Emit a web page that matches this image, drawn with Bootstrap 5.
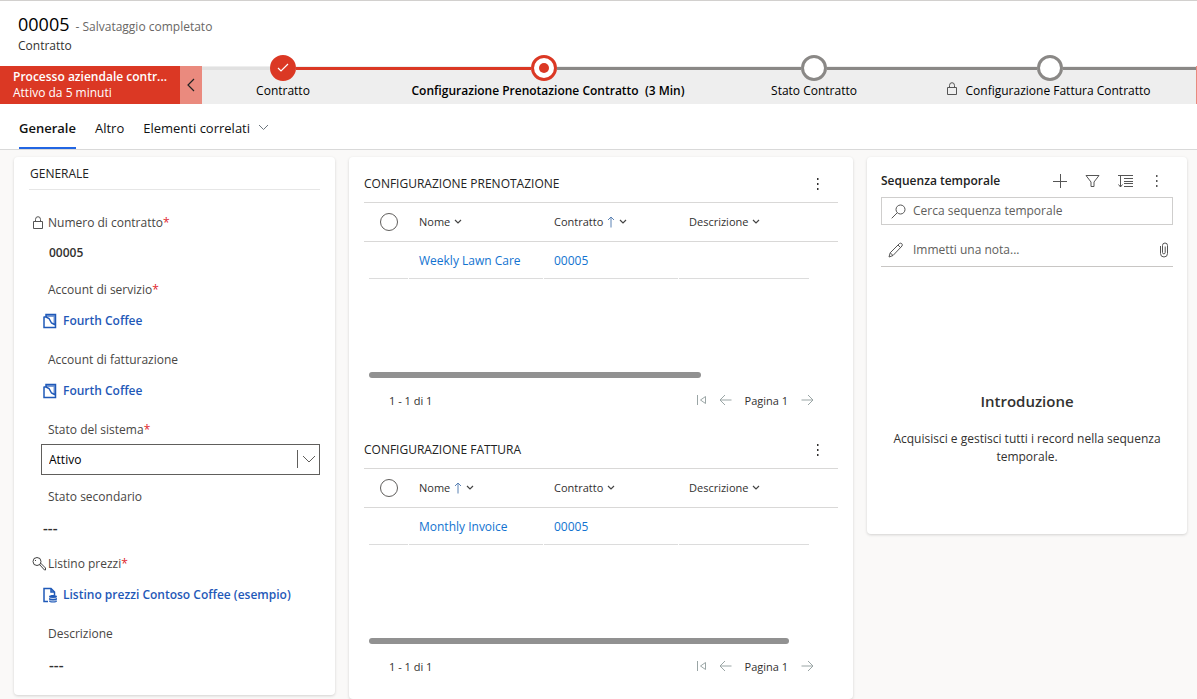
<!DOCTYPE html>
<html lang="it">
<head>
<meta charset="utf-8">
<meta name="viewport" content="width=device-width, initial-scale=1">
<title>00005 - Contratto</title>
<link href="https://cdn.jsdelivr.net/npm/bootstrap@5.3.0/dist/css/bootstrap.min.css" rel="stylesheet">
<style>
  :root { --red: #db3824; --gray: #8a8886; --rule: #d9d8d7; }
  body { font-family: "Open Sans", "Noto Sans", sans-serif; font-size: 12px; line-height: 18px; color: #323130; background: #faf9f8; }
  a { text-decoration: none; }
  svg { display: block; fill: none; stroke: currentColor; flex: none; }
  button { border: 0; background: none; padding: 0; color: inherit; }

  .page-head { border-top: 1px solid #d2d0ce; padding: 12px 18px 11px; }
  .page-title { gap: 6px; padding-bottom: 1px; }
  .page-head h1 { font-size: 18px; line-height: 22px; font-weight: 500; color: #000; }
  .saved { color: #696765; }

  .process-name { width: 180px; height: 38px; padding: 3px 8px 3px 13px; background: var(--red); color: #fff; line-height: 16px; flex: none; }
  .process-toggle { width: 22px; background: #ea8a7e; color: #222; flex: none; }
  .process-end { width: 1px; background: #ea8a7e; }
  .stages { display: grid; grid-template-columns: 162fr 360fr 180fr 292fr; background: #eee; color: #000; }
  .stage { margin-top: -11px; min-width: 0; }
  .stage-name { padding-top: 1px; }
  .track { height: 3px; background: var(--gray); }
  .track.done { background: var(--red); }
  .track.idle { background: #e1e1e1; }
  .dot { width: 26px; height: 26px; border-radius: 50%; border: 3px solid var(--gray); background: #fff; padding: 0; color: #fff; }
  .dot.done { border-color: var(--red); background: var(--red); }
  .dot.now { border-color: var(--red); }
  .dot.now::after { content: ""; width: 10px; height: 10px; border-radius: 50%; background: var(--red); }

  .tabs { border-bottom: 1px solid #d9d9d9; padding: 0 19px; height: 46px; font-size: 13px; gap: 19px; }
  .tabs a { color: #111; display: flex; align-items: center; border-bottom: 2px solid transparent; padding-top: 4px; }
  .tabs a.active { font-weight: 600; border-color: #2266e3; }

  .board { display: grid; grid-template-columns: 321fr 504fr 320fr; gap: 14px; align-items: start; padding: 7px 10px 0 14px; }
  .panel { background: #fff; border-radius: 4px; box-shadow: 0 1px 3px rgba(0,0,0,.16); padding: 0 15px; min-width: 0; }
  .panel h2 { font-size: 12px; line-height: 18px; font-weight: 400; margin: 0; color: #222; }

  .general { padding-bottom: 16px; }
  .general h2 { padding: 8px 1px 6px; border-bottom: 1px solid #e6e6e6; margin-bottom: 23px; }
  .field { margin-bottom: 12px; }
  .field.lookup { margin-bottom: 13px; }
  .field-label { height: 20px; margin-bottom: 5px; display: flex; align-items: center; color: #484644; }
  .field-mark { width: 19px; padding-left: 3px; color: #444; flex: none; }
  .field-value { height: 30px; display: flex; align-items: center; padding-left: 20px; font-weight: 600; }
  .lookup .field-value { height: 32px; }
  .field-value.flush { padding-left: 14px; }
  .field-value.empty { font-size: 15px; }
  .field-value a { color: #1f59b8; display: flex; align-items: center; gap: 6px; }
  .req { color: #e0262e; }
  .state { position: relative; margin: -1px 0 0 12px; }
  .state select { display: block; width: 100%; height: 31px; border: 1px solid #605e5c; border-radius: 0; background: #fff; appearance: none; padding: 0 30px 0 7px; color: #000; }
  .state span { position: absolute; right: 4px; top: 6px; height: 18px; border-left: 1px solid #605e5c; padding: 5px 0 0 4px; pointer-events: none; color: #605e5c; }

  .grid-block { height: 266px; }
  .grid-title { height: 46px; padding: 8px 14px 0 0; border-bottom: 1px solid var(--rule); }
  .subgrids { padding-bottom: 10px; }
  .records { width: 100%; table-layout: fixed; }
  .records th { height: 38px; border-bottom: 1px solid var(--rule); padding: 0 0 0 10px; font-weight: 400; font-size: 11px; }
  .records th:first-child { padding-left: 16px; }
  .records td { height: 37px; padding: 0 1px 0 0; }
  .records td:first-child { padding-left: 5px; }
  .records td:last-child { padding-right: 29px; }
  .cell { height: 37px; line-height: 38px; padding-left: 10px; border-bottom: 1px solid #dcdcdc; }
  .cell a { color: #1273d0; }
  .pick { appearance: none; width: 18px; height: 18px; border: 1px solid #605e5c; border-radius: 50%; margin: 0; display: block; }
  .sort { display: inline-flex; align-items: center; gap: 4px; }
  .sort svg { color: #444; }
  .hscroll { height: 6px; border-radius: 3px; background: #919191; margin: 93px 0 14px 5px; }
  .pager { padding: 0 24px 0 25px; font-size: 11px; gap: 13px; }
  .pager button { color: #9aa5a5; padding-bottom: 2px; }

  .timeline { padding: 15px 14px 68px; }
  .timeline h2 { font-weight: 600; }
  .tools { gap: 18px; padding-right: 10px; color: #555; }
  .search { height: 28px; border: 1px solid #cfcecd; margin-top: 7px; padding: 0 9px; gap: 7px; }
  .note { height: 42px; border-bottom: 1px solid #c8c6c4; padding: 8px 4px 0 7px; gap: 9px; }
  .search, .note { color: #555; }
  .search input, .note input { border: 0; outline: 0; padding: 0; flex: 1; min-width: 0; background: none; color: #323130; }
  .timeline ::placeholder { color: #605e5c; opacity: 1; }
  .intro { padding-top: 124px; text-align: center; }
  .intro h3 { font-size: 15px; line-height: 20px; font-weight: 600; margin: 0 0 19px; }
</style>
</head>
<body>
<svg width="0" height="0" class="position-absolute" aria-hidden="true">
  <symbol id="lock" viewBox="0 0 12 14"><path stroke="#555" d="M1.5 5.500h9v7h-9zM3.500 5.500V3.500a2.500 2.800 0 0 1 5 0v2"/></symbol>
  <symbol id="account" viewBox="0 0 14 16"><path stroke-width="1.500" d="M1 4h3M1 3.500v11h11.500V1.500H3V4l3 1.500 2.500 4.500 4 2"/><path fill="currentColor" stroke="none" d="M3 2h9.500v10L10.500 11V4H3z" opacity=".6"/></symbol>
  <symbol id="chev" viewBox="0 0 8 6"><path d="M1 1l3 3 3-3" stroke-width="1.200"/></symbol>
  <symbol id="bigchev" viewBox="0 0 14 8"><path d="M1 1l6 6 6-6"/></symbol>
  <symbol id="up" viewBox="0 0 8 12"><path d="M4 11.500V1M1 4l3-3 3 3" stroke="#5a82b4"/></symbol>
  <symbol id="dots" viewBox="0 0 4 14"><path fill="currentColor" stroke="none" d="M1 1h1.500v2H1zM1 6h1.500v2H1zM1 11h1.500v2H1z"/></symbol>
  <symbol id="first" viewBox="0 0 10 12"><path d="M1.500 1v10M9.500 2.500v7L4.500 6z"/></symbol>
  <symbol id="prev" viewBox="0 0 13 12"><path d="M12.500 6H1M6 1L1 6l5 5"/></symbol>
  <symbol id="next" viewBox="0 0 13 12"><path d="M.5 6H12M7 1l5 5-5 5"/></symbol>
</svg>

<header class="bg-white">
  <div class="page-head">
    <div class="page-title d-flex align-items-baseline">
      <h1 class="m-0">00005</h1><span class="saved">- Salvataggio completato</span>
    </div>
    <div>Contratto</div>
  </div>

  <div class="d-flex">
    <div class="process-name">
      <div class="fw-semibold text-truncate">Processo aziendale contr...</div>
      <div>Attivo da 5 minuti</div>
    </div>
    <button class="process-toggle d-flex align-items-center justify-content-center" aria-label="Comprimi"><svg width="8" height="14" viewBox="0 0 8 14"><path d="M7 1L1 7l6 6" stroke-width="1.200"/></svg></button>
    <div class="stages flex-fill">
      <div class="stage">
        <div class="d-flex align-items-center"><i class="track idle flex-fill"></i><button class="dot done d-flex align-items-center justify-content-center" aria-label="Contratto"><svg width="12" height="10" viewBox="0 0 12 10"><path d="M1 5l3 3 7-7" stroke-width="1.200"/></svg></button><i class="track done flex-fill"></i></div>
        <div class="stage-name text-center">Contratto</div>
      </div>
      <div class="stage">
        <div class="d-flex align-items-center"><i class="track done flex-fill"></i><button class="dot now d-flex align-items-center justify-content-center" aria-label="Configurazione Prenotazione Contratto"></button><i class="track flex-fill"></i></div>
        <div class="stage-name text-center fw-semibold ps-2">Configurazione Prenotazione Contratto &nbsp;(3 Min)</div>
      </div>
      <div class="stage">
        <div class="d-flex align-items-center"><i class="track flex-fill"></i><button class="dot" aria-label="Stato Contratto"></button><i class="track flex-fill"></i></div>
        <div class="stage-name text-center">Stato Contratto</div>
      </div>
      <div class="stage">
        <div class="d-flex align-items-center"><i class="track flex-fill"></i><button class="dot" aria-label="Configurazione Fattura Contratto"></button><i class="track flex-fill"></i></div>
        <div class="stage-name d-flex justify-content-center gap-2 pe-1"><svg width="12" height="14"><use href="#lock"/></svg>Configurazione Fattura Contratto</div>
      </div>
    </div>
    <div class="process-end"></div>
  </div>

  <nav class="tabs d-flex">
    <a href="#" class="active">Generale</a>
    <a href="#">Altro</a>
    <a href="#" class="gap-2">Elementi correlati <svg width="11" height="7" viewBox="0 0 11 7" class="text-secondary"><path d="M1 1l4.500 4.500L10 1"/></svg></a>
  </nav>
</header>

<main class="board">
  <section class="panel general">
    <h2>GENERALE</h2>
    <div class="field">
      <div class="field-label"><span class="field-mark"><svg width="12" height="14"><use href="#lock"/></svg></span>Numero di contratto<span class="req">*</span></div>
      <div class="field-value">00005</div>
    </div>
    <div class="field lookup">
      <div class="field-label"><span class="field-mark"></span>Account di servizio<span class="req">*</span></div>
      <div class="field-value flush"><a href="#"><svg width="14" height="16"><use href="#account"/></svg>Fourth Coffee</a></div>
    </div>
    <div class="field lookup">
      <div class="field-label"><span class="field-mark"></span>Account di fatturazione</div>
      <div class="field-value flush"><a href="#"><svg width="14" height="16"><use href="#account"/></svg>Fourth Coffee</a></div>
    </div>
    <div class="field">
      <label class="field-label" for="stato"><span class="field-mark"></span>Stato del sistema<span class="req">*</span></label>
      <div class="state">
        <select id="stato"><option>Attivo</option><option>Inattivo</option></select>
        <span><svg width="14" height="8"><use href="#bigchev"/></svg></span>
      </div>
    </div>
    <div class="field">
      <div class="field-label"><span class="field-mark"></span>Stato secondario</div>
      <div class="field-value flush empty">---</div>
    </div>
    <div class="field lookup">
      <div class="field-label"><span class="field-mark"><svg width="14" height="14" viewBox="0 0 14 14"><circle cx="5" cy="4.500" r="4"/><path d="M7.500 7.500l5 5.500h1v-2L8.500 6M3 3.500h1"/></svg></span>Listino prezzi<span class="req">*</span></div>
      <div class="field-value flush"><a href="#"><svg width="14" height="16" viewBox="0 0 14 16"><path d="M5 14.500H1v-13h7l3.500 3.500v3M8 1.500V5h3.500" stroke-width="1.500"/><path fill="currentColor" stroke="none" d="M6 9.500c0-2 8-2 8 0V14c0 2-8 2-8 0z"/><path stroke="#fff" d="M6 10.500c1 1.300 7 1.300 8 0M6 13c1 1.300 7 1.300 8 0" stroke-width=".8"/></svg>Listino prezzi Contoso Coffee (esempio)</a></div>
    </div>
    <div class="field mb-0">
      <div class="field-label"><span class="field-mark"></span>Descrizione</div>
      <div class="field-value empty">---</div>
    </div>
  </section>

  <section class="panel subgrids">
    <div class="grid-block">
      <div class="grid-title d-flex align-items-center justify-content-between"><h2>CONFIGURAZIONE PRENOTAZIONE</h2><button class="px-1" aria-label="Altri comandi"><svg width="4" height="14"><use href="#dots"/></svg></button></div>
      <table class="records">
        <colgroup><col style="width:45px"><col style="width:135px"><col style="width:135px"><col></colgroup>
        <thead><tr>
          <th><input type="checkbox" class="pick" aria-label="Seleziona tutto"></th>
          <th><span class="sort">Nome <svg width="8" height="6"><use href="#chev"/></svg></span></th>
          <th><span class="sort">Contratto <svg width="8" height="12"><use href="#up"/></svg><svg width="8" height="6"><use href="#chev"/></svg></span></th>
          <th><span class="sort">Descrizione <svg width="8" height="6"><use href="#chev"/></svg></span></th>
        </tr></thead>
        <tbody><tr>
          <td><div class="cell"></div></td><td><div class="cell"><a href="#">Weekly Lawn Care</a></div></td><td><div class="cell"><a href="#">00005</a></div></td><td><div class="cell"></div></td>
        </tr></tbody>
      </table>
      <div class="hscroll" style="width:70%"></div>
      <div class="pager d-flex align-items-center">
        <span class="me-auto">1 - 1 di 1</span>
        <button aria-label="Prima pagina"><svg width="10" height="12"><use href="#first"/></svg></button>
        <button aria-label="Pagina precedente"><svg width="13" height="12"><use href="#prev"/></svg></button>
        <span>Pagina 1</span>
        <button aria-label="Pagina successiva"><svg width="13" height="12"><use href="#next"/></svg></button>
      </div>
    </div>
    <div class="grid-block">
      <div class="grid-title d-flex align-items-center justify-content-between"><h2>CONFIGURAZIONE FATTURA</h2><button class="px-1" aria-label="Altri comandi"><svg width="4" height="14"><use href="#dots"/></svg></button></div>
      <table class="records">
        <colgroup><col style="width:45px"><col style="width:135px"><col style="width:135px"><col></colgroup>
        <thead><tr>
          <th><input type="checkbox" class="pick" aria-label="Seleziona tutto"></th>
          <th><span class="sort">Nome <svg width="8" height="12"><use href="#up"/></svg><svg width="8" height="6"><use href="#chev"/></svg></span></th>
          <th><span class="sort">Contratto <svg width="8" height="6"><use href="#chev"/></svg></span></th>
          <th><span class="sort">Descrizione <svg width="8" height="6"><use href="#chev"/></svg></span></th>
        </tr></thead>
        <tbody><tr>
          <td><div class="cell"></div></td><td><div class="cell"><a href="#">Monthly Invoice</a></div></td><td><div class="cell"><a href="#">00005</a></div></td><td><div class="cell"></div></td>
        </tr></tbody>
      </table>
      <div class="hscroll" style="width:88.6%"></div>
      <div class="pager d-flex align-items-center">
        <span class="me-auto">1 - 1 di 1</span>
        <button aria-label="Prima pagina"><svg width="10" height="12"><use href="#first"/></svg></button>
        <button aria-label="Pagina precedente"><svg width="13" height="12"><use href="#prev"/></svg></button>
        <span>Pagina 1</span>
        <button aria-label="Pagina successiva"><svg width="13" height="12"><use href="#next"/></svg></button>
      </div>
    </div>
  </section>

  <section class="panel timeline">
    <div class="d-flex align-items-center justify-content-between">
      <h2>Sequenza temporale</h2>
      <div class="tools d-flex align-items-center">
        <button aria-label="Crea"><svg width="14" height="14" viewBox="0 0 14 14"><path d="M7.500 0v14M0 7.500h14"/></svg></button>
        <button aria-label="Filtra"><svg width="15" height="14" viewBox="0 0 15 14"><path d="M1 1.500h13L9 8v4.500H6V8z"/></svg></button>
        <button aria-label="Ordina"><svg width="15" height="14" viewBox="0 0 15 14"><path d="M0 1.500h15M6 4.500h9M6 7.500h9M6 9.500h9M6 12.500h9M2.500 2v11M.5 10.500l2 2.500 2-2.500"/></svg></button>
        <button class="px-1" aria-label="Altri comandi"><svg width="4" height="14"><use href="#dots"/></svg></button>
      </div>
    </div>
    <div class="search d-flex align-items-center">
      <svg width="15" height="15" viewBox="0 0 15 15"><circle cx="9.500" cy="5.500" r="4.500"/><path d="M6.300 8.700L.7 14.300"/></svg>
      <input type="search" aria-label="Cerca sequenza temporale" placeholder="Cerca sequenza temporale">
    </div>
    <div class="note d-flex align-items-center">
      <svg width="16" height="16" viewBox="0 0 16 16"><path d="M1 15l1.200-4.200L11.500 1.500q1.300-.8 2.300.2t.2 2.300L5 13.500zM10 3l2.800 2.800M2.200 10.800L5 13.500"/></svg>
      <input type="text" aria-label="Immetti una nota" placeholder="Immetti una nota...">
      <svg width="10" height="16" viewBox="0 0 10 16"><path d="M1.500 4v7.500a3.300 3.300 0 0 0 7 0V3.500a2.500 2.500 0 0 0-5 0v7a1.300 1.300 0 0 0 2.700 0V4.500"/></svg>
    </div>
    <div class="intro">
      <h3>Introduzione</h3>
      <p class="mb-0">Acquisisci e gestisci tutti i record nella sequenza temporale.</p>
    </div>
  </section>
</main>
<script src="https://cdn.jsdelivr.net/npm/bootstrap@5.3.0/dist/js/bootstrap.bundle.min.js"></script>
</body>
</html>
